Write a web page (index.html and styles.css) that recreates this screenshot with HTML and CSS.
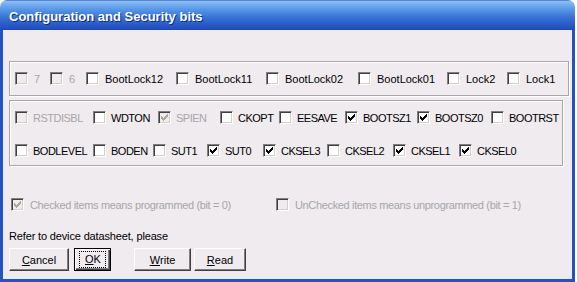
FILE: index.html
```html
<!DOCTYPE html>
<html lang="en">
<head>
    <meta charset="UTF-8">
    <title>Configuration and Security bits</title>
    <link rel="stylesheet" href="styles.css">
</head>
<body>
    <div class="window">
        <div class="titlebar">Configuration and Security bits</div>
        <div class="client">
            <!-- Lock bits -->
            <div class="group lockbits">
                <div class="row row-lock">
                    <label class="check disabled"><span class="box"></span><span class="text">7</span></label>
                    <label class="check disabled"><span class="box"></span><span class="text">6</span></label>
                    <label class="check"><span class="box"></span><span class="text">BootLock12</span></label>
                    <label class="check"><span class="box"></span><span class="text">BootLock11</span></label>
                    <label class="check"><span class="box"></span><span class="text">BootLock02</span></label>
                    <label class="check"><span class="box"></span><span class="text">BootLock01</span></label>
                    <label class="check"><span class="box"></span><span class="text">Lock2</span></label>
                    <label class="check"><span class="box"></span><span class="text">Lock1</span></label>
                </div>
            </div>

            <!-- Fuse bits -->
            <div class="group fusebits">
                <div class="row row-fuse1">
                    <label class="check disabled"><span class="box"></span><span class="text">RSTDISBL</span></label>
                    <label class="check"><span class="box"></span><span class="text">WDTON</span></label>
                    <label class="check disabled"><span class="box"><svg class="tick" viewBox="0 0 7 7"><path d="M0 2h1v3H0zM1 3h1v3H1zM2 4h1v3H2zM3 3h1v3H3zM4 2h1v3H4zM5 1h1v3H5zM6 0h1v3H6z"/></svg></span><span class="text">SPIEN</span></label>
                    <label class="check"><span class="box"></span><span class="text">CKOPT</span></label>
                    <label class="check"><span class="box"></span><span class="text">EESAVE</span></label>
                    <label class="check"><span class="box"><svg class="tick" viewBox="0 0 7 7"><path d="M0 2h1v3H0zM1 3h1v3H1zM2 4h1v3H2zM3 3h1v3H3zM4 2h1v3H4zM5 1h1v3H5zM6 0h1v3H6z"/></svg></span><span class="text">BOOTSZ1</span></label>
                    <label class="check"><span class="box"><svg class="tick" viewBox="0 0 7 7"><path d="M0 2h1v3H0zM1 3h1v3H1zM2 4h1v3H2zM3 3h1v3H3zM4 2h1v3H4zM5 1h1v3H5zM6 0h1v3H6z"/></svg></span><span class="text">BOOTSZ0</span></label>
                    <label class="check"><span class="box"></span><span class="text">BOOTRST</span></label>
                </div>
                <div class="row row-fuse2">
                    <label class="check"><span class="box"></span><span class="text">BODLEVEL</span></label>
                    <label class="check"><span class="box"></span><span class="text">BODEN</span></label>
                    <label class="check"><span class="box"></span><span class="text">SUT1</span></label>
                    <label class="check"><span class="box"><svg class="tick" viewBox="0 0 7 7"><path d="M0 2h1v3H0zM1 3h1v3H1zM2 4h1v3H2zM3 3h1v3H3zM4 2h1v3H4zM5 1h1v3H5zM6 0h1v3H6z"/></svg></span><span class="text">SUT0</span></label>
                    <label class="check"><span class="box"><svg class="tick" viewBox="0 0 7 7"><path d="M0 2h1v3H0zM1 3h1v3H1zM2 4h1v3H2zM3 3h1v3H3zM4 2h1v3H4zM5 1h1v3H5zM6 0h1v3H6z"/></svg></span><span class="text">CKSEL3</span></label>
                    <label class="check"><span class="box"></span><span class="text">CKSEL2</span></label>
                    <label class="check"><span class="box"><svg class="tick" viewBox="0 0 7 7"><path d="M0 2h1v3H0zM1 3h1v3H1zM2 4h1v3H2zM3 3h1v3H3zM4 2h1v3H4zM5 1h1v3H5zM6 0h1v3H6z"/></svg></span><span class="text">CKSEL1</span></label>
                    <label class="check"><span class="box"><svg class="tick" viewBox="0 0 7 7"><path d="M0 2h1v3H0zM1 3h1v3H1zM2 4h1v3H2zM3 3h1v3H3zM4 2h1v3H4zM5 1h1v3H5zM6 0h1v3H6z"/></svg></span><span class="text">CKSEL0</span></label>
                </div>
            </div>

            <!-- Legend -->
            <div class="row legend">
                <label class="check disabled"><span class="box"><svg class="tick" viewBox="0 0 7 7"><path d="M0 2h1v3H0zM1 3h1v3H1zM2 4h1v3H2zM3 3h1v3H3zM4 2h1v3H4zM5 1h1v3H5zM6 0h1v3H6z"/></svg></span><span class="text">Checked items means programmed (bit = 0)</span></label>
                <label class="check disabled"><span class="box"></span><span class="text">UnChecked items means unprogrammed (bit = 1)</span></label>
            </div>

            <div class="note">Refer to device datasheet, please</div>

            <div class="buttons">
                <button class="btn btn-cancel"><u>C</u>ancel</button>
                <button class="btn btn-ok default"><span class="focus"><u>O</u>K</span></button>
                <button class="btn btn-write"><u>W</u>rite</button>
                <button class="btn btn-read"><u>R</u>ead</button>
            </div>
        </div>
    </div>
</body>
</html>
```

FILE: styles.css
```css
body {
    margin: 0;
    background: #fff;
    font-family: "Liberation Sans", Arial, sans-serif;
    font-size: 11px;
    color: #000;
}
.window {
    width: 575px;
    height: 282px;
    display: flex;
    flex-direction: column;
}
.titlebar {
    height: 30px;
    box-sizing: border-box;
    padding: 4px 0 0 9px;
    line-height: 26px;
    font-size: 13px;
    font-weight: bold;
    color: #fff;
    text-shadow: 1px 1px #0f2a8a;
    border-radius: 7px 7px 0 0;
    background: linear-gradient(#1a4cc4 0, #90c0f4 1px, #78b0f0 4px, #5494e6 10px, #3a74d6 17px, #2a5cc8 24px, #2452c0 28px, #1d45ae 30px);
}
.client {
    flex: 1;
    background: #efebef;
    border: 3px solid #2352c6;
    border-top: 0;
    padding-top: 31px;
}

/* etched group boxes */
.group {
    border: 1px solid #a7a6aa;
    box-shadow: inset 1px 1px #fff, 1px 1px #fff;
    margin-left: 6px;
    padding-left: 5px;
}
.lockbits {
    margin-right: 3px;
    padding-top: 10px;
    padding-bottom: 10px;
}
.fusebits {
    margin-top: 4px;
    margin-right: 9px;
    padding-top: 10px;
    padding-bottom: 8px;
}
.fusebits .text {
    letter-spacing: -0.5px;
}
.row {
    display: grid;
    align-items: start;
    height: 13px;
}
.row-fuse2 {
    margin-top: 20px;
}
.row-lock {
    grid-template-columns: 35px 36px 90px 90px 92px 89px 60px auto;
}
.row-fuse1 {
    grid-template-columns: 78px 65px 62px 59px 66px 72px 74px auto;
}
.row-fuse2 {
    grid-template-columns: 78px 60px 54px 56px 64px 66px 66px auto;
}

/* classic checkboxes */
.check {
    display: flex;
    gap: 5px;
    white-space: nowrap;
}
.lockbits .check,
.legend .check {
    gap: 6px;
}
.box {
    width: 13px;
    height: 13px;
    flex: none;
    box-sizing: border-box;
    background: #fff;
    border: 1px solid;
    border-color: #808080 #fff #fff #808080;
    box-shadow: inset 1px 1px #404040, inset -1px -1px #d4d0c8;
    display: flex;
    align-items: center;
    justify-content: center;
}
.tick {
    width: 7px;
    height: 7px;
    fill: #000;
    shape-rendering: crispEdges;
}
.text {
    line-height: 13px;
    padding-top: 1px;
}
.disabled .box {
    background: #efebef;
}
.disabled .tick {
    fill: #aca899;
}
.disabled .text {
    color: #a7a6aa;
}

.legend {
    grid-template-columns: 265px auto;
    margin: 32px 0 0 8px;
}
.legend .text {
    letter-spacing: -0.35px;
}
.note {
    margin: 19px 0 0 6px;
    line-height: 13px;
    letter-spacing: -0.15px;
}

/* push buttons */
.buttons {
    display: flex;
    margin: 5px 0 0 6px;
}
.btn {
    height: 23px;
    box-sizing: border-box;
    padding: 0;
    font-family: "Liberation Sans", Arial, sans-serif;
    font-size: 11px;
    color: #000;
    background: #efebef;
    border: 1px solid;
    border-color: #fff #404040 #404040 #fff;
    box-shadow: inset -1px -1px #808080;
    display: flex;
    align-items: center;
    justify-content: center;
}
.btn-cancel {
    width: 60px;
}
.btn-ok {
    width: 37px;
    margin-left: 5px;
}
.btn-write {
    width: 57px;
    margin-left: 23px;
}
.btn-read {
    width: 52px;
    margin-left: 3px;
}
.btn.default {
    border: 1px solid #000;
    box-shadow: inset 1px 1px #fff, inset -1px -1px #404040, inset -2px -2px #808080;
}
.focus {
    border: 1px dotted #000;
    padding: 1px 4px 1px 5px;
    line-height: 13px;
}
```
